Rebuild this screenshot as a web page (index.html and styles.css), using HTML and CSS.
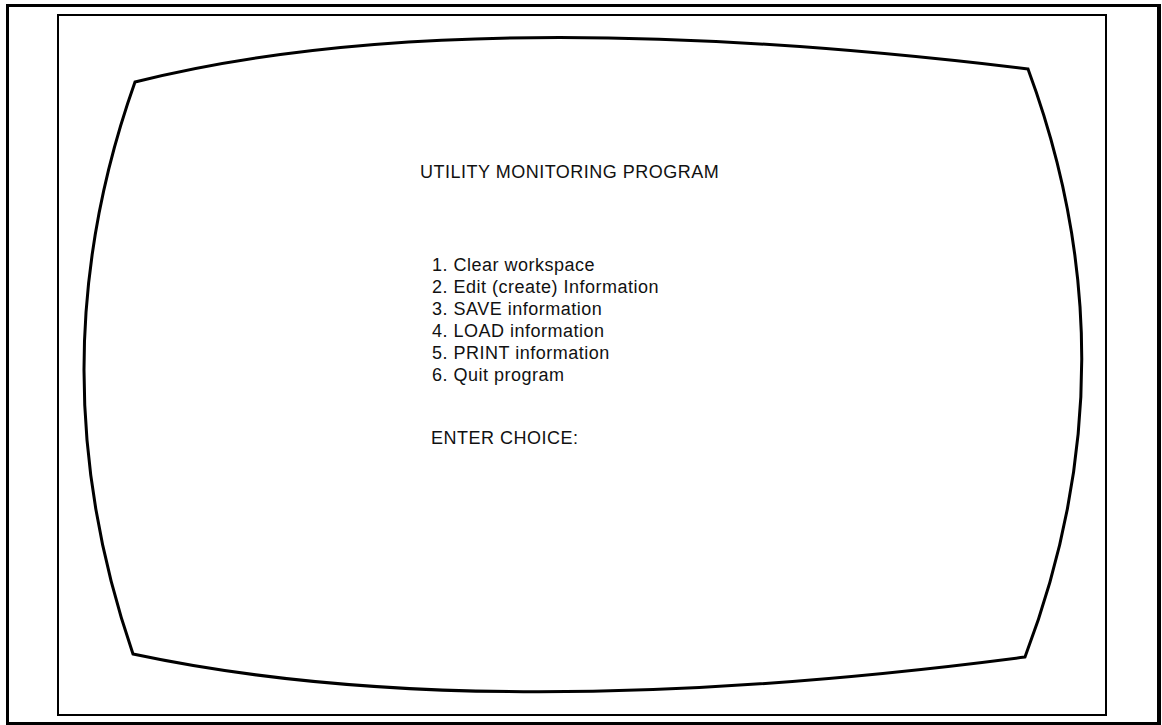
FILE: index.html
```html
<!DOCTYPE html>
<html lang="en">
<head>
    <meta charset="UTF-8">
    <meta name="viewport" content="width=device-width, initial-scale=1.0">
    <title>Utility Monitoring Program</title>
    <link rel="stylesheet" href="styles.css">
</head>
<body>
    <div class="frame">
        <div class="monitor">
            <svg class="screen-outline" viewBox="59 16 1046 698" preserveAspectRatio="none">
                <path d="M135 82 Q460 0 1028 69 Q1137 363 1025 657 Q480 728 133 654 Q34 366 135 82 Z"
                      fill="none" stroke="#000" stroke-width="3" stroke-linejoin="miter"/>
            </svg>
            <div class="screen">
                <h1 class="title">UTILITY MONITORING PROGRAM</h1>
                <ol class="menu">
                    <li>1. Clear workspace</li>
                    <li>2. Edit (create) Information</li>
                    <li>3. SAVE information</li>
                    <li>4. LOAD information</li>
                    <li>5. PRINT information</li>
                    <li>6. Quit program</li>
                </ol>
                <p class="prompt">ENTER CHOICE:</p>
            </div>
        </div>
    </div>
</body>
</html>
```

FILE: styles.css
```css
body {
    margin: 0;
    background: #fff;
    color: #111;
    font-family: "Liberation Sans", Arial, sans-serif;
}
.frame {
    box-sizing: border-box;
    width: 1155px;
    height: 721px;
    margin: 4px 1px 0 6px;
    border: 3px solid #000;
    border-right-width: 4px;
}
.monitor {
    position: relative;
    box-sizing: border-box;
    width: 1050px;
    height: 702px;
    margin: 7px 0 0 48px;
    border: 2px solid #000;
}
.screen-outline {
    position: absolute;
    top: 0;
    left: 0;
    width: 100%;
    height: 100%;
}
.screen {
    position: relative;
    padding: 145px 0 0 361px;
}
.title,
.menu,
.prompt {
    margin: 0;
    padding: 0;
    font-size: 18px;
    font-weight: normal;
    line-height: 22px;
    letter-spacing: 0.5px;
}
.menu {
    list-style: none;
    margin: 71px 0 0 12px;
}
.prompt {
    margin: 41px 0 0 11px;
}
```
